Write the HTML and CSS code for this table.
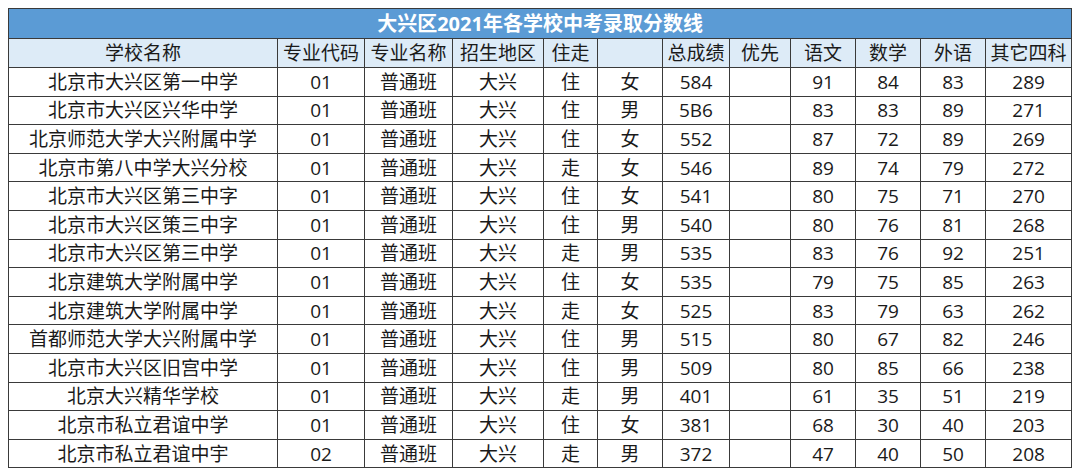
FILE: index.html
```html
<!DOCTYPE html>
<html lang="zh-CN">
<head>
<meta charset="utf-8">
<title>大兴区2021年各学校中考录取分数线</title>
<link rel="stylesheet" href="styles.css">
</head>
<body>
<table class="score-table">
  <colgroup>
    <col class="c-school"><col class="c-code"><col class="c-major"><col class="c-area">
    <col class="c-live"><col class="c-sex"><col class="c-total"><col class="c-pri">
    <col class="c-sub"><col class="c-sub"><col class="c-sub"><col class="c-other">
  </colgroup>
  <thead>
    <tr class="title-row"><th colspan="12">大兴区2021年各学校中考录取分数线</th></tr>
    <tr class="head-row">
      <th>学校名称</th><th>专业代码</th><th>专业名称</th><th>招生地区</th><th>住走</th><th></th>
      <th>总成绩</th><th>优先</th><th>语文</th><th>数学</th><th>外语</th><th>其它四科</th>
    </tr>
  </thead>
  <tbody>
    <tr><td>北京市大兴区第一中学</td><td>01</td><td>普通班</td><td>大兴</td><td>住</td><td>女</td><td>584</td><td></td><td>91</td><td>84</td><td>83</td><td>289</td></tr>
    <tr><td>北京市大兴区兴华中学</td><td>01</td><td>普通班</td><td>大兴</td><td>住</td><td>男</td><td>5B6</td><td></td><td>83</td><td>83</td><td>89</td><td>271</td></tr>
    <tr><td>北京师范大学大兴附属中学</td><td>01</td><td>普通班</td><td>大兴</td><td>住</td><td>女</td><td>552</td><td></td><td>87</td><td>72</td><td>89</td><td>269</td></tr>
    <tr><td>北京市第八中学大兴分校</td><td>01</td><td>普通班</td><td>大兴</td><td>走</td><td>女</td><td>546</td><td></td><td>89</td><td>74</td><td>79</td><td>272</td></tr>
    <tr><td>北京市大兴区第三中字</td><td>01</td><td>普通班</td><td>大兴</td><td>住</td><td>女</td><td>541</td><td></td><td>80</td><td>75</td><td>71</td><td>270</td></tr>
    <tr><td>北京市大兴区策三中字</td><td>01</td><td>普通班</td><td>大兴</td><td>住</td><td>男</td><td>540</td><td></td><td>80</td><td>76</td><td>81</td><td>268</td></tr>
    <tr><td>北京市大兴区第三中学</td><td>01</td><td>普通班</td><td>大兴</td><td>走</td><td>男</td><td>535</td><td></td><td>83</td><td>76</td><td>92</td><td>251</td></tr>
    <tr><td>北京建筑大学附属中学</td><td>01</td><td>普通班</td><td>大兴</td><td>住</td><td>女</td><td>535</td><td></td><td>79</td><td>75</td><td>85</td><td>263</td></tr>
    <tr><td>北京建筑大学附属中学</td><td>01</td><td>普通班</td><td>大兴</td><td>走</td><td>女</td><td>525</td><td></td><td>83</td><td>79</td><td>63</td><td>262</td></tr>
    <tr><td>首都师范大学大兴附属中学</td><td>01</td><td>普通班</td><td>大兴</td><td>住</td><td>男</td><td>515</td><td></td><td>80</td><td>67</td><td>82</td><td>246</td></tr>
    <tr><td>北京市大兴区旧宫中学</td><td>01</td><td>普通班</td><td>大兴</td><td>住</td><td>男</td><td>509</td><td></td><td>80</td><td>85</td><td>66</td><td>238</td></tr>
    <tr><td>北京大兴精华学校</td><td>01</td><td>普通班</td><td>大兴</td><td>走</td><td>男</td><td>401</td><td></td><td>61</td><td>35</td><td>51</td><td>219</td></tr>
    <tr><td>北京市私立君谊中学</td><td>01</td><td>普通班</td><td>大兴</td><td>住</td><td>女</td><td>381</td><td></td><td>68</td><td>30</td><td>40</td><td>203</td></tr>
    <tr><td>北京市私立君谊中宇</td><td>02</td><td>普通班</td><td>大兴</td><td>走</td><td>男</td><td>372</td><td></td><td>47</td><td>40</td><td>50</td><td>208</td></tr>
  </tbody>
</table>
</body>
</html>
```

FILE: styles.css
```css
html, body {
  background: #ffffff;
}
body {
  margin: 8px;
  font-family: "Open Sans", "Noto Sans CJK SC", sans-serif;
  color: #1a1a1a;
}
.score-table {
  border-collapse: collapse;
  table-layout: fixed;
  width: 1064px;
  border: 1px solid #3a3a3a;
}
.c-school { width: 269px; }
.c-code { width: 87px; }
.c-major { width: 88px; }
.c-area { width: 91px; }
.c-live { width: 54px; }
.c-sex { width: 65px; }
.c-total { width: 67px; }
.c-pri { width: 61px; }
.c-sub { width: 65px; }
.c-other { width: 86px; }

.score-table th,
.score-table td {
  border: 1px solid #3a3a3a;
  padding: 0;
  text-align: center;
  font-weight: normal;
  font-size: 19px;
  line-height: 20px;
  white-space: nowrap;
  overflow: hidden;
}
.title-row th {
  height: 29px;
  background: #5b9bd5;
  color: #ffffff;
  font-weight: bold;
  font-size: 20px;
}
.head-row th {
  height: 28px;
  background: #ddebf7;
}
.score-table tbody td {
  height: 27.6px;
}
```
